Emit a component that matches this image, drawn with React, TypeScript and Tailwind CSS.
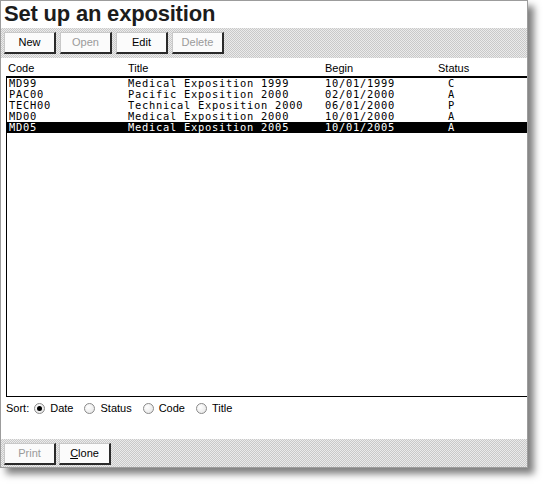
import { useState } from "react"

const rows = [
  { code: "MD99", title: "Medical Exposition 1999", begin: "10/01/1999", status: "C" },
  { code: "PAC00", title: "Pacific Exposition 2000", begin: "02/01/2000", status: "A" },
  { code: "TECH00", title: "Technical Exposition 2000", begin: "06/01/2000", status: "P" },
  { code: "MD00", title: "Medical Exposition 2000", begin: "10/01/2000", status: "A" },
  { code: "MD05", title: "Medical Exposition 2005", begin: "10/01/2005", status: "A" },
]

const band =
  "bg-[repeating-conic-gradient(#c9c9c9_0_25%,#ebebeb_0_50%)] bg-[length:2px_2px]"

function Btn({
  children,
  disabled,
}: {
  children: React.ReactNode
  disabled?: boolean
}) {
  return (
    <button
      className={
        "w-[52px] h-[22px] bg-[#fbfbfb] border-l border-t border-[#c8c8c8] border-r-2 border-r-[#2a2a2a] border-b-2 border-b-[#2a2a2a] text-[11px] leading-none flex items-center justify-center " +
        (disabled ? "text-[#9a9a9a]" : "text-black")
      }
    >
      {children}
    </button>
  )
}

function Radio({ label, checked, onClick }: { label: string; checked: boolean; onClick: () => void }) {
  return (
    <label className="flex items-center gap-[5px] mr-[11px] cursor-default" onClick={onClick}>
      <span className="w-[11px] h-[11px] rounded-full border border-[#8a8a8a] bg-[radial-gradient(circle_at_35%_35%,#ffffff,#e2e2e2)] flex items-center justify-center">
        {checked && <span className="w-[5px] h-[5px] rounded-full bg-black" />}
      </span>
      <span>{label}</span>
    </label>
  )
}

export default function App() {
  const [sort, setSort] = useState("Date")

  return (
    <div className="w-[543px] h-[484px] bg-white font-['Liberation_Sans',Arial,sans-serif] text-[11px] text-black">
      <div className="w-[528px] h-[468px] border border-[#9c9c9c] flex flex-col shadow-[6px_6px_7px_rgba(0,0,0,0.5)] bg-white">
        <div className="h-[27px] pl-[3px] flex items-start">
          <h1 className="text-[22px] font-bold leading-none mt-[2px] text-[#1c1c1c] tracking-[-0.2px]">
            Set up an exposition
          </h1>
        </div>
        <div className={"h-[30px] flex items-start gap-[4px] pl-[3px] pt-[4px] " + band}>
          <Btn>New</Btn>
          <Btn disabled>Open</Btn>
          <Btn>Edit</Btn>
          <Btn disabled>Delete</Btn>
        </div>
        <div className="h-[18px] grid grid-cols-[120px_197px_113px_1fr] pl-[7px] pt-[5px] leading-[11px]">
          <span>Code</span>
          <span>Title</span>
          <span>Begin</span>
          <span>Status</span>
        </div>
        <div className="h-[321px] ml-[5px] border-l border-b border-t-2 border-black font-['DejaVu_Sans_Mono',monospace] text-[10.4px] tracking-[0.75px] leading-[11px]">
          {rows.map((r, i) => (
            <div
              key={r.code}
              className={
                "grid grid-cols-[119px_197px_113px_1fr] pl-[2px] h-[11px] " +
                (i === rows.length - 1 ? "bg-black text-white" : "")
              }
            >
              <span>{r.code}</span>
              <span>{r.title}</span>
              <span>{r.begin}</span>
              <span className="pl-[10px]">{r.status}</span>
            </div>
          ))}
        </div>
        <div className="h-[42px] flex items-start pl-[5px] pt-[5px] leading-[13px]">
          <span className="mr-[5px]">Sort:</span>
          {["Date", "Status", "Code", "Title"].map((s) => (
            <Radio key={s} label={s} checked={sort === s} onClick={() => setSort(s)} />
          ))}
        </div>
        <div className={"flex-1 flex items-start gap-[3px] pl-[3px] pt-[4px] " + band}>
          <Btn disabled>Print</Btn>
          <Btn>
            <span>
              <span className="underline">C</span>lone
            </span>
          </Btn>
        </div>
      </div>
    </div>
  )
}
